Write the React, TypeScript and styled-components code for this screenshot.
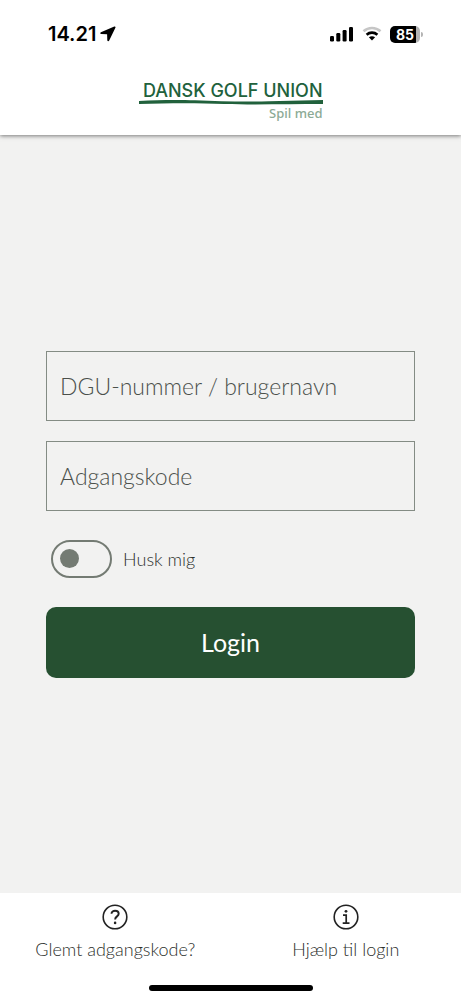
import React from "react";
import styled, { createGlobalStyle } from "styled-components";

const GlobalStyle = createGlobalStyle`
  *, *::before, *::after { box-sizing: border-box; }
  body { margin: 0; background: #f2f2f1; font-family: Lato, "Open Sans", sans-serif; }
`;

const Screen = styled.div`
  min-height: 100vh;
  display: flex;
  flex-direction: column;
  background: #f2f2f1;
`;

const Header = styled.header`
  background: #fff;
  box-shadow: 0 1px 4px rgba(0, 0, 0, 0.5);
`;

const StatusBar = styled.div`
  display: flex;
  align-items: center;
  justify-content: space-between;
  height: 68px;
  padding: 0 38px 0 48px;
  color: #000;
  font-family: Inter, sans-serif;
`;

const Clock = styled.div`
  display: flex;
  align-items: center;
  gap: 4px;
  font-size: 20px;
  line-height: 24px;
  font-weight: 600;
`;

const StatusIcons = styled.div`
  display: flex;
  align-items: center;
  gap: 8px;
`;

const Battery = styled.div`
  display: flex;
  align-items: center;
  gap: 1px;

  &::after {
    content: "";
    width: 2px;
    height: 5px;
    border-radius: 0 2px 2px 0;
    background: #b4b4b4;
  }
`;

const BatteryLevel = styled.span`
  width: 30px;
  height: 17px;
  border-radius: 5px;
  background: linear-gradient(90deg, #000 85%, #b4b4b4 85%);
  color: #fff;
  font-size: 14px;
  line-height: 17px;
  font-weight: 700;
  text-align: center;
`;

const Brand = styled.div`
  display: flex;
  flex-direction: column;
  align-items: flex-end;
  width: fit-content;
  margin: 0 auto;
  padding: 14px 0;
  color: #21613c;
`;

const BrandName = styled.span`
  font-family: Inter, sans-serif;
  font-size: 18px;
  line-height: 17px;
  font-weight: 500;
  white-space: nowrap;
`;

const BrandLine = styled.svg`
  display: block;
  width: 100%;
  height: 6px;
`;

const Tagline = styled.span`
  color: #8caa95;
  font-family: "Noto Sans", sans-serif;
  font-size: 13px;
  line-height: 16px;
  font-weight: 500;
`;

const Main = styled.main`
  flex: 1;
  display: flex;
  flex-direction: column;
  justify-content: center;
  padding: 24px 10%;
`;

const Form = styled.form`
  display: flex;
  flex-direction: column;
  gap: 29px;
`;

const Fields = styled.div`
  display: flex;
  flex-direction: column;
  gap: 20px;
`;

const Field = styled.input`
  width: 100%;
  height: 70px;
  padding: 0 13px;
  border: 1px solid #848c84;
  border-radius: 0;
  background: transparent;
  color: #4b504b;
  font-family: inherit;
  font-size: 23px;
  font-weight: 300;

  &::placeholder { color: #4b504b; opacity: 1; }
`;

const Remember = styled.label`
  display: flex;
  align-items: center;
  gap: 11px;
  padding-left: 5px;
  color: #2c2f2c;
  font-size: 18px;
  line-height: 24px;
  font-weight: 300;
`;

const Toggle = styled.input`
  appearance: none;
  display: flex;
  align-items: center;
  width: 61px;
  height: 38px;
  margin: 0;
  padding: 0 7px;
  border: 2px solid #747b73;
  border-radius: 19px;

  &::before {
    content: "";
    width: 19px;
    height: 19px;
    border-radius: 50%;
    background: #747b73;
  }

  &:checked { justify-content: flex-end; }
`;

const LoginButton = styled.button`
  height: 71px;
  border: 0;
  border-radius: 10px;
  background: #265031;
  color: #fff;
  font-family: inherit;
  font-size: 25px;
  font-weight: 400;
`;

const Footer = styled.footer`
  background: #fff;
`;

const HelpLinks = styled.nav`
  display: grid;
  grid-template-columns: 1fr 1fr;
  padding-top: 11px;
`;

const HelpLink = styled.a`
  display: flex;
  flex-direction: column;
  align-items: center;
  gap: 7px;
  padding: 0 4px;
  color: #2c2f2c;
  font-size: 18px;
  line-height: 24px;
  font-weight: 300;
  text-align: center;
  text-decoration: none;
`;

const HomeIndicator = styled.div`
  width: 164px;
  height: 6px;
  margin: 24px auto 9px;
  border-radius: 3px;
  background: #000;
`;

const LocationIcon = () => (
  <svg width="16" height="16" viewBox="0 0 16 16" aria-hidden="true">
    <path d="M14.3.5.9 6.3C-.1 6.8.1 8 1.2 8.1l5.9.2.2 5.9c.1 1.2 1.4 1.4 1.9.3L15.4 1.700C15.800.8 15.200.1 14.300.5Z" fill="#000" />
  </svg>
);

const SignalIcon = () => (
  <svg width="24" height="16" viewBox="0 0 24 16" aria-hidden="true">
    <rect x="0" y="10" width="4" height="5.500" rx="1.200" />
    <rect x="6.300" y="7" width="4" height="8.500" rx="1.200" />
    <rect x="12.600" y="4" width="4" height="11.500" rx="1.200" />
    <rect x="19" y="1" width="4" height="14.500" rx="1.200" />
  </svg>
);

const WifiIcon = () => (
  <svg width="20" height="16" viewBox="0 0 20 16" fill="none" aria-hidden="true">
    <path d="M1.500 5.200C6.300.9 13.700.9 18.500 5.200" stroke="#c6c6c6" strokeWidth="2.600" />
    <path d="M4.600 8.700c3.100-2.800 7.700-2.800 10.800 0" stroke="#000" strokeWidth="2.600" />
    <path d="M6.900 11.300c1.800-1.500 4.400-1.500 6.200 0L10 14.600Z" fill="#000" />
  </svg>
);

const QuestionIcon = () => (
  <svg width="26" height="26" viewBox="0 0 26 26" fill="none" stroke="#222" aria-hidden="true">
    <circle cx="13" cy="13" r="11.800" strokeWidth="1.600" />
    <path d="M9.500 9.700C9.500 5.700 16.700 5.700 16.700 9.800c0 2.700-3.600 2.500-3.600 5.700" strokeWidth="1.900" />
    <circle cx="13.100" cy="18.900" r="1.300" fill="#222" stroke="none" />
  </svg>
);

const InfoIcon = () => (
  <svg width="26" height="26" viewBox="0 0 26 26" fill="none" stroke="#222" aria-hidden="true">
    <circle cx="13" cy="13" r="11.800" strokeWidth="1.600" />
    <path d="M10 11.200h3.200v7.900M9.700 19.200h6.800" strokeWidth="1.700" />
    <circle cx="13" cy="7.300" r="1.400" fill="#222" stroke="none" />
  </svg>
);

export default function App() {
  return (
    <>
      <GlobalStyle />
      <Screen>
        <Header>
          <StatusBar>
            <Clock>
              14.21
              <LocationIcon />
            </Clock>
            <StatusIcons>
              <SignalIcon />
              <WifiIcon />
              <Battery>
                <BatteryLevel>85</BatteryLevel>
              </Battery>
            </StatusIcons>
          </StatusBar>
          <Brand>
            <BrandName>DANSK GOLF UNION</BrandName>
            <BrandLine viewBox="0 0 184 6" preserveAspectRatio="none" aria-hidden="true">
              <path d="M0 2C20 .8 40 .8 56 1.300 80 2.300 105 2.900 130 2.300L184 1V5C150 5 115 6 85 5 60 3.800 30 3.900 0 5Z" fill="#21613c" />
            </BrandLine>
            <Tagline>Spil med</Tagline>
          </Brand>
        </Header>
        <Main>
          <Form onSubmit={(event) => event.preventDefault()}>
            <Fields>
              <Field type="text" aria-label="DGU-nummer / brugernavn" placeholder="DGU-nummer / brugernavn" autoComplete="username" />
              <Field type="password" aria-label="Adgangskode" placeholder="Adgangskode" autoComplete="current-password" />
            </Fields>
            <Remember>
              <Toggle type="checkbox" role="switch" />
              Husk mig
            </Remember>
            <LoginButton type="submit">Login</LoginButton>
          </Form>
        </Main>
        <Footer>
          <HelpLinks>
            <HelpLink href="#adgangskode">
              <QuestionIcon />
              Glemt adgangskode?
            </HelpLink>
            <HelpLink href="#hjaelp">
              <InfoIcon />
              Hjælp til login
            </HelpLink>
          </HelpLinks>
          <HomeIndicator />
        </Footer>
      </Screen>
    </>
  );
}
